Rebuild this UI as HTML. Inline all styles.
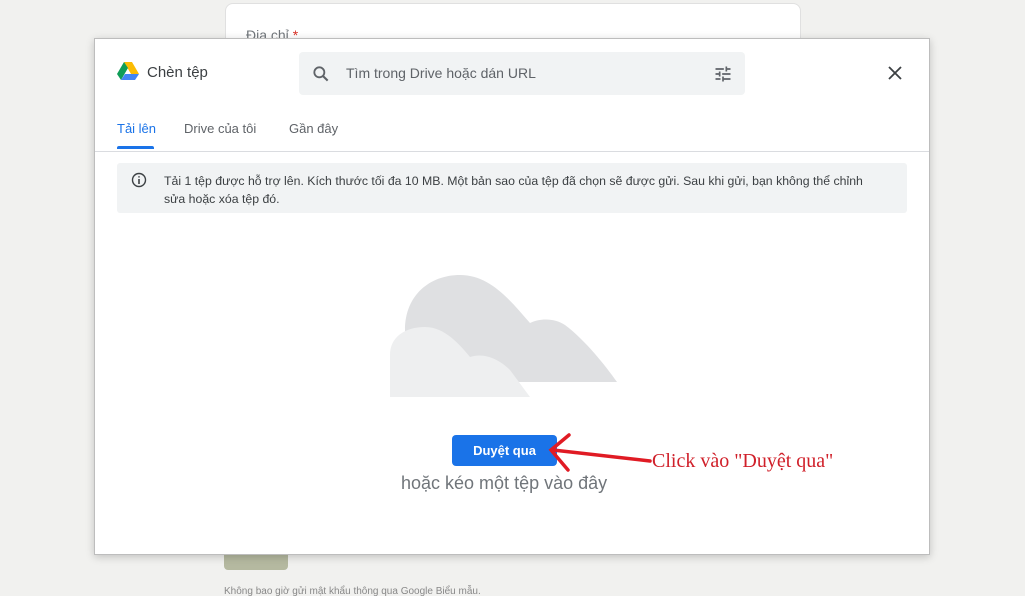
<!DOCTYPE html>
<html><head><meta charset="utf-8"><style>
body{margin:0;width:1025px;height:603px;background:#f1f1ef;font-family:"Liberation Sans",Arial,sans-serif;position:relative;overflow:hidden}
.card{position:absolute;left:225px;top:3px;width:574px;height:60px;background:#fff;border:1px solid #e0e0e0;border-radius:8px}
.dlg{position:absolute;left:94px;top:38px;width:834px;height:515px;background:#fff;border:1px solid #bdbdbd;box-shadow:0 2px 8px rgba(0,0,0,.2)}
.abs{position:absolute}
</style></head><body>
<div class="card"><div class="abs" style="left:20px;top:23px;font-size:14px;color:#70757a">Địa chỉ <span style="color:#d93025">*</span></div></div>
<div class="abs" style="left:224px;top:540px;width:64px;height:30px;background:#b5b9a0;border-radius:4px"></div>
<div class="abs" style="left:684px;top:546px;font-size:11px;color:#999">Xóa hết câu trả lời</div>
<div class="abs" style="left:224px;top:586px;font-size:10px;color:#888">Không bao giờ gửi mật khẩu thông qua Google Biểu mẫu.</div>
<div class="abs" style="left:0;top:596px;width:1025px;height:7px;background:#fff"></div>
<div class="dlg">
 <svg class="abs" style="left:22px;top:22px" width="22" height="20" viewBox="0 0 22 20"><path d="M7 1h8l7 12h-8z" fill="#fbbc04"/><path d="M7 1L0 13l4 6 7-12z" fill="#0f9d58"/><path d="M4 19h14l4-6H8z" fill="#4285f4"/></svg>
 <div class="abs" style="left:52px;top:25px;font-size:15px;color:#3c4043">Chèn tệp</div>
 <div class="abs" style="left:204px;top:13px;width:446px;height:43px;background:#f1f3f4;border-radius:4px">
  <svg class="abs" style="left:12px;top:12px" width="20" height="20" viewBox="0 0 24 24"><circle cx="10" cy="10" r="6" fill="none" stroke="#5f6368" stroke-width="2.2"/><path d="M14.5 14.5L20 20" stroke="#5f6368" stroke-width="2.5"/></svg>
  <div class="abs" style="left:47px;top:13px;font-size:14px;color:#5f6368">Tìm trong Drive hoặc dán URL</div>
  <svg class="abs" style="left:414px;top:12px" width="20" height="20" viewBox="0 0 24 24" fill="#5f6368"><path d="M3 17v2h6v-2zm0-12v2h10V5zm10 16v-2h8v-2h-8v-2h-2v6zM7 9v2H3v2h4v2h2V9zm14 4v-2H11v2zm-6-4h2V7h4V5h-4V3h-2z"/></svg>
 </div>
 <svg class="abs" style="left:793px;top:27px" width="14" height="14" viewBox="0 0 14 14"><path d="M1 1l12 12M13 1L1 13" stroke="#3c4043" stroke-width="1.8"/></svg>
 <div class="abs" style="left:22px;top:82px;font-size:13px;color:#1a73e8">Tải lên</div>
 <div class="abs" style="left:22px;top:107px;width:37px;height:3px;background:#1a73e8;border-radius:2px 2px 0 0"></div>
 <div class="abs" style="left:89px;top:82px;font-size:13px;color:#5f6368">Drive của tôi</div>
 <div class="abs" style="left:194px;top:82px;font-size:13px;color:#5f6368">Gần đây</div>
 <div class="abs" style="left:0;top:112px;width:834px;height:1px;background:#dadce0"></div>
 <div class="abs" style="left:22px;top:124px;width:790px;height:50px;background:#f1f3f4;border-radius:3px">
  <svg class="abs" style="left:14px;top:9px" width="16" height="16" viewBox="0 0 16 16"><circle cx="8" cy="8" r="6.5" fill="none" stroke="#3c4043" stroke-width="1.4"/><path d="M8 7v5M8 4.2v1.3" stroke="#3c4043" stroke-width="1.6"/></svg>
  <div class="abs" style="left:47px;top:9px;width:720px;font-size:12.3px;line-height:18px;color:#3c4043">Tải 1 tệp được hỗ trợ lên. Kích thước tối đa 10 MB. Một bản sao của tệp đã chọn sẽ được gửi. Sau khi gửi, bạn không thể chỉnh sửa hoặc xóa tệp đó.</div>
 </div>
</div>
<svg class="abs" style="left:0;top:0" width="1025" height="603">
 <path d="M405,382 L405,330 C405,295 430,275 460,275 C490,275 510,300 530,323 C540,318 555,318 565,325 C585,340 605,365 617,382 Z" fill="#dfe0e2"/>
 <path d="M390,397 L390,355 C390,337 405,327 425,327 C445,327 460,345 470,357 C485,352 500,360 510,370 L530,397 Z" fill="#eeeff0"/>
</svg>
<div class="abs" style="left:452px;top:435px;width:105px;height:31px;background:#1a73e8;border-radius:4px;color:#fff;font-size:13px;font-weight:bold;text-align:center;line-height:31px">Duyệt qua</div>
<div class="abs" style="left:401px;top:473px;font-size:18px;color:#70757a">hoặc kéo một tệp vào đây</div>
<svg class="abs" style="left:0;top:0" width="1025" height="603"><path d="M650,461 L553,450 M569,435 L551,450 L568,470" fill="none" stroke="#e01b24" stroke-width="3.5" stroke-linecap="round"/></svg>
<div class="abs" style="left:652px;top:450px;font-family:'Liberation Serif',serif;font-size:20px;color:#d0202a">Click vào "Duyệt qua"</div>
</body></html>
